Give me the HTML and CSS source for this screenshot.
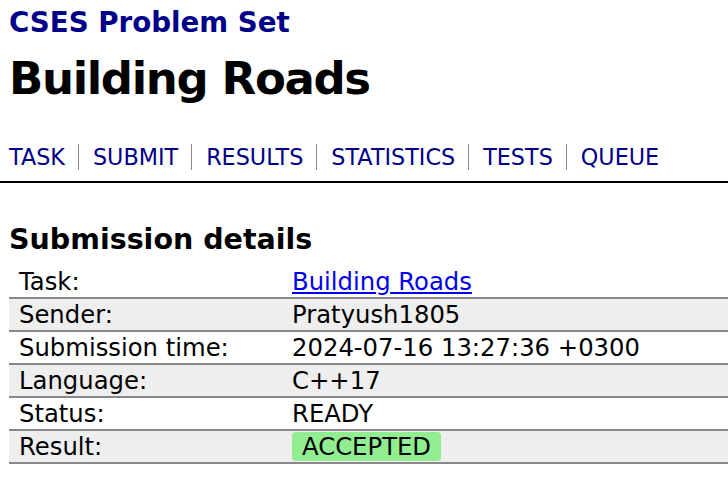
FILE: index.html
```html
<!DOCTYPE html>
<html>
<head>
<meta charset="utf-8">
<link rel="stylesheet" href="styles.css">
</head>
<body>
<div class="header">
  <div class="site">CSES Problem Set</div>
  <h1 class="title">Building Roads</h1>
</div>
<nav class="nav">
  <a class="nav-item">TASK</a>
  <a class="nav-item">SUBMIT</a>
  <a class="nav-item">RESULTS</a>
  <a class="nav-item">STATISTICS</a>
  <a class="nav-item">TESTS</a>
  <a class="nav-item">QUEUE</a>
</nav>
<div class="content">
  <h2 class="section">Submission details</h2>
  <table class="details">
    <tr><td class="key">Task:</td><td class="val"><a class="link">Building Roads</a></td></tr>
    <tr><td class="key">Sender:</td><td class="val">Pratyush1805</td></tr>
    <tr><td class="key">Submission time:</td><td class="val">2024-07-16 13:27:36 +0300</td></tr>
    <tr><td class="key">Language:</td><td class="val">C++17</td></tr>
    <tr><td class="key">Status:</td><td class="val">READY</td></tr>
    <tr><td class="key">Result:</td><td class="val"><span class="verdict">ACCEPTED</span></td></tr>
  </table>
</div>
</body>
</html>
```
FILE: styles.css
```css
html, body {
  margin: 0;
  padding: 0;
  background: #fff;
  color: #000;
  font-family: "DejaVu Sans", Verdana, sans-serif;
  overflow: hidden;
}
.header {
  padding: 6px 9px 0;
}
.site {
  font-size: 27.7px;
  font-weight: bold;
  color: #000088;
  line-height: 34px;
}
.title {
  margin: 12px 0 0;
  font-size: 45px;
  letter-spacing: -1.35px;
  line-height: 54px;
  font-weight: bold;
}
.nav {
  display: flex;
  align-items: center;
  margin-top: 38px;
  padding: 0 0 11px 9px;
  border-bottom: 2px solid #000;
}
.nav-item {
  font-size: 22.3px;
  color: #000088;
  line-height: 26px;
  padding: 0 13px 0 14px;
  border-left: 1px solid #888;
}
.nav-item:first-child {
  padding-left: 0;
  border-left: none;
}
.content {
  padding: 0 0 0 9px;
}
.section {
  margin: 40px 0 8px;
  font-size: 28.5px;
  line-height: 34px;
  font-weight: bold;
}
.details {
  border-collapse: collapse;
  width: 760px;
  font-size: 24.3px;
}
.details tr {
  border-top: 2px solid #888;
}
.details tr:first-child {
  border-top: none;
}
.details tr:last-child {
  border-bottom: 2px solid #888;
}
.details tr:nth-child(even) {
  background: #eee;
}
.details td {
  padding: 0 10px;
  height: 31px;
  line-height: 31px;
}
.details tr:first-child td {
  height: 32px;
}
.key {
  width: 253px;
}
.link {
  color: #0000ee;
  text-decoration: underline;
}
.verdict {
  background: #90ee90;
  border-radius: 4px;
  padding: 0 10px;
  display: inline-block;
  line-height: 29px;
}
```
